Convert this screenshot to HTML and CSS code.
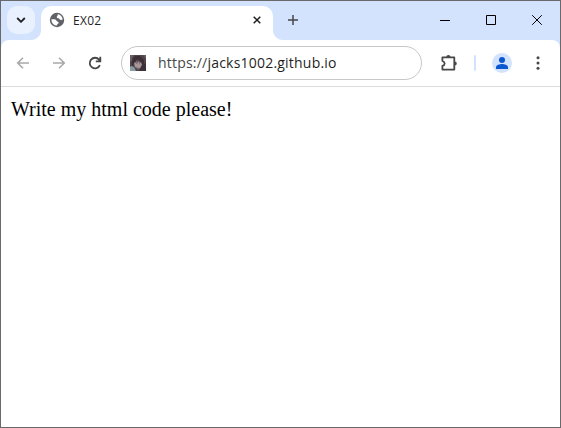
FILE: index.html
```html
<!DOCTYPE html>
<html lang="en">
<head>
<meta charset="utf-8">
<title>EX02</title>
<link rel="stylesheet" href="styles.css">
</head>
<body>
<div class="window">
  <header class="tabstrip">
    <button class="tab-search" aria-label="Search tabs">
      <svg width="10" height="6" viewBox="0 0 10 6"><path d="M1.2 1 5 4.8 8.8 1" fill="none" stroke="#1f1f1f" stroke-width="1.8"/></svg>
    </button>
    <div class="tab">
      <svg class="globe" width="16" height="16" viewBox="0 0 16 16">
        <circle cx="8" cy="8" r="7.2" fill="#5f6368"/>
        <path d="M8.6 2.3c1.8.2 3.4 1.2 4.3 2.7.4.8.7 1.6.8 2.5-.7.5-1.7.7-2.6.2-.8-.5-.7-1.3-1.7-1.4-1 0-1.7-.3-1.7-1.2 0-.8.8-1 .9-1.7zM2.4 7.3c1.4-.1 3.2-.1 4.4.5 1 .5.5 1.5 1.5 1.7 1 .1 1.5.5 1.3 1.5-.2.8-1.2.7-1.4 1.4l-.1 1.2A5.8 5.8 0 0 1 2.4 7.3z" fill="#fff"/>
      </svg>
      <span class="tab-title">EX02</span>
      <svg class="tab-close" width="8" height="8" viewBox="0 0 8 8"><path d="M.7.7 7.3 7.3M7.3.7.7 7.3" stroke="#1f1f1f" stroke-width="1.5"/></svg>
    </div>
    <svg class="new-tab" width="10" height="10" viewBox="0 0 10 10"><path d="M5 0v10M0 5h10" stroke="#474747" stroke-width="1.5"/></svg>
    <div class="controls">
      <svg width="10" height="10" viewBox="0 0 10 10"><path d="M0 5.5h10" stroke="#000"/></svg>
      <svg width="10" height="10" viewBox="0 0 10 10"><path d="M.5.5h9v9h-9z" fill="none" stroke="#000"/></svg>
      <svg width="10" height="10" viewBox="0 0 10 10"><path d="m.2.2 9.6 9.6m0-9.6L.2 9.8" stroke="#000"/></svg>
    </div>
  </header>
  <nav class="toolbar">
    <svg class="nav-icon disabled" viewBox="0 0 16 16"><path d="M14 8H3M8 2.7 2.7 8 8 13.3"/></svg>
    <svg class="nav-icon disabled" viewBox="0 0 16 16"><path d="M2 8h11M8 2.7 13.3 8 8 13.3"/></svg>
    <svg class="nav-icon" viewBox="0 0 16 16"><path d="M12.9 10.2A5.3 5.3 0 1 1 12.1 4.6L13 5.6M13.3 1.8v4.6H8.8"/></svg>
    <div class="address">
      <svg class="favicon" width="16" height="16" viewBox="0 0 16 16">
        <path fill="#50444a" d="M0 0h16v16H0z"/>
        <path fill="#6a5d62" d="M0 0h4L2 3v3H0zM13 0h3v4z"/>
        <path fill="#3c3036" d="M5 1h5l4 4v4l-2 2-1-4-3-3-4 5-2 2V5z"/>
        <path fill="#a89698" d="m4 8 2-1 1 2 1-3 2 2 1-1 1 3-2 3-2 1-3-2z"/>
        <path fill="#7b6a70" d="m5 8 2-3v4zM8 6l2 1v3zM6 12l3 1-1 2z"/>
        <path fill="#869da1" d="m1 11 3 1 2 4H0v-4z"/>
        <path fill="#3c3137" d="m12 10 4-2v8H9l2-3z"/>
      </svg>
      <span class="url"><span class="scheme">https://</span>jacks1002.github.io</span>
    </div>
    <svg class="extensions" width="18" height="18" viewBox="0 0 18 18">
      <path d="M2.4 3.4h11.9v12.2H2.4v-3.7c3-.9 3-4 0-4.9z" fill="none" stroke="#474747" stroke-width="1.8" stroke-linejoin="round"/>
      <path d="M6.3 3a2.1 2.1 0 0 1 4.2 0zM14.7 7.4a2.1 2.1 0 0 1 0 4.2z" fill="#474747"/>
    </svg>
    <span class="divider"></span>
    <svg class="profile" width="20" height="20" viewBox="0 0 20 20"><circle cx="10" cy="10" r="10" fill="#d3e3fd"/><circle cx="10" cy="7" r="3" fill="#0b57d0"/><path d="M4 16v-1.8c0-2 3.6-3.2 6-3.2s6 1.2 6 3.2V16z" fill="#0b57d0"/></svg>
    <svg class="menu" width="4" height="14" viewBox="0 0 4 14" fill="#474747"><circle cx="2" cy="1.8" r="1.5"/><circle cx="2" cy="7" r="1.5"/><circle cx="2" cy="12.2" r="1.5"/></svg>
  </nav>
  <main class="page">Write my html code please!</main>
</div>
</body>
</html>
```
FILE: styles.css
```css
* { box-sizing: border-box; }
body { margin: 0; background: #fff; }
svg { display: block; flex: none; }
.window {
  width: 561px;
  height: 428px;
  border: 1px solid #69696c;
  background: #d3e3fd;
  display: flex;
  flex-direction: column;
}
.tabstrip {
  height: 39px;
  display: flex;
  padding: 5px 18px 0 6px;
}
.tab-search {
  width: 28px;
  height: 28px;
  border: 0;
  padding: 0;
  border-radius: 10px;
  background: #e9f1fe;
  display: grid;
  place-items: center;
}
.tab {
  position: relative;
  width: 232px;
  height: 34px;
  margin-left: 6px;
  padding: 0 12px 6px 8px;
  border-radius: 10px 10px 0 0;
  background: #fff;
  display: flex;
  align-items: center;
}
.tab::before, .tab::after {
  content: "";
  position: absolute;
  bottom: 0;
  width: 10px;
  height: 10px;
}
.tab::before { right: 100%; background: radial-gradient(circle at 0 0, transparent 9.5px, #fff 10.5px); }
.tab::after { left: 100%; background: radial-gradient(circle at 100% 0, transparent 9.5px, #fff 10.5px); }
.tab-title {
  margin: 1px 0 0 8px;
  font: 12px/16px "Open Sans", sans-serif;
  color: #1f1f1f;
  letter-spacing: 0.3px;
}
.tab-close { margin-left: auto; }
.new-tab { margin: 9px 0 0 15px; }
.controls {
  margin: 9px 0 0 auto;
  display: flex;
  gap: 36px;
}
.toolbar {
  height: 47px;
  flex: none;
  background: #fff;
  border-bottom: 1px solid #dadcdf;
  border-radius: 8px 8px 0 0;
  display: flex;
  align-items: center;
  padding: 0 20px 0 14px;
}
.nav-icon {
  width: 16px;
  height: 16px;
  margin-right: 20px;
  fill: none;
  stroke: #474747;
  stroke-width: 1.8;
}
.disabled { stroke: #a9a9a9; stroke-width: 1.6; }
.address {
  width: 301px;
  height: 34px;
  margin-left: -2px;
  padding-left: 8px;
  border: 1px solid #c7c7c7;
  border-radius: 17px;
  display: flex;
  align-items: center;
}
.url {
  margin-left: 12px;
  font: 14px/20px "Open Sans", sans-serif;
  color: #1f1f1f;
  letter-spacing: 0.21px;
  white-space: nowrap;
}
.scheme { color: #474747; }
.extensions { margin-left: 18px; }
.divider {
  width: 2px;
  height: 16px;
  margin-left: 16px;
  border-radius: 1px;
  background: #d3e3fd;
}
.profile { margin-left: 16px; }
.menu { margin-left: auto; }
.page {
  flex: 1;
  background: #fff;
  padding: 10px;
  font: 20px/24px "Liberation Serif", serif;
  color: #000;
}
```
